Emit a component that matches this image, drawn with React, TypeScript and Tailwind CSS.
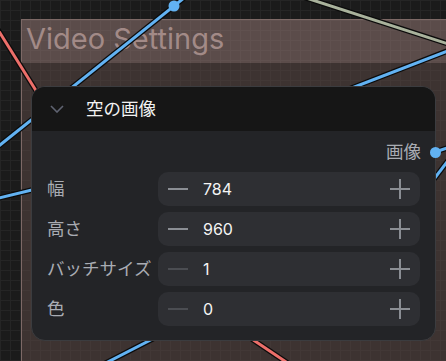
import React from 'react';

type Wire = { x1: number; y1: number; x2: number; y2: number; color: string };

const wires: Wire[] = [
  { x1: -10, y1: 17, x2: 50, y2: 113, color: '#ec6f6a' },
  { x1: 184, y1: -2, x2: -5, y2: 149, color: '#62b2f2' },
  { x1: -5, y1: 199, x2: 40, y2: 188, color: '#62b2f2' },
  { x1: 450, y1: 50, x2: 300, y2: 108, color: '#62b2f2' },
  { x1: 300, y1: -4, x2: 450, y2: 44.5, color: '#a9b29c' },
  { x1: 435, y1: 152, x2: 450, y2: 147, color: '#62b2f2' },
  { x1: 450, y1: 158, x2: 425, y2: 191, color: '#62b2f2' },
  { x1: 100, y1: 366, x2: 170, y2: 330, color: '#62b2f2' },
  { x1: 240, y1: 331, x2: 295, y2: 368, color: '#ec6f6a' },
];

const widgets = [
  { label: '幅', value: '784', canDecrement: true },
  { label: '高さ', value: '960', canDecrement: true },
  { label: 'バッチサイズ', value: '1', canDecrement: false },
  { label: '色', value: '0', canDecrement: false },
];

const font = "font-['Inter','Noto_Sans_CJK_JP',sans-serif]";

function Minus({ enabled }: { enabled: boolean }) {
  return (
    <svg width="20" height="20" viewBox="0 0 20 20">
      <line x1="0" y1="10" x2="20" y2="10" stroke={enabled ? '#8b8e94' : '#4b4d52'} strokeWidth="2" />
    </svg>
  );
}

function Plus() {
  return (
    <svg width="20" height="20" viewBox="0 0 20 20">
      <line x1="0" y1="10" x2="20" y2="10" stroke="#8b8e94" strokeWidth="2" />
      <line x1="10" y1="0" x2="10" y2="20" stroke="#8b8e94" strokeWidth="2" />
    </svg>
  );
}

function Wires() {
  return (
    <svg className="absolute inset-0" width="446" height="361" viewBox="0 0 446 361">
      {wires.map((w, i) => (
        <g key={i}>
          <line x1={w.x1} y1={w.y1} x2={w.x2} y2={w.y2} stroke="#0b0b0b" strokeWidth="5.5" />
          <line x1={w.x1} y1={w.y1} x2={w.x2} y2={w.y2} stroke={w.color} strokeWidth="3" />
        </g>
      ))}
      <circle cx="174" cy="6" r="5.5" fill="#62b2f2" />
    </svg>
  );
}

export default function App() {
  return (
    <div
      className={`relative w-[446px] h-[361px] overflow-hidden bg-[#1b1b1b] bg-[linear-gradient(to_right,#252525_1px,transparent_1px),linear-gradient(to_bottom,#252525_1px,transparent_1px)] bg-[length:10px_10px] ${font}`}
    >
      {/* group */}
      <div className="absolute left-[21px] top-[19px] right-[-20px] bottom-[-20px] flex flex-col border-l border-t border-[#7d6966]">
        <div className="h-[43px] bg-[#9c7e7a]/50 flex items-center pl-[4px] pb-[6px]">
          <span className="text-[29px] leading-none text-[#a28a87]">Video Settings</span>
        </div>
        <div className="flex-1 bg-[#5f4b47]/50" />
      </div>

      <Wires />

      {/* node */}
      <div className="absolute left-[31px] top-[86px] w-[405px] h-[255px] rounded-[14px] border border-[#3b3c3f] bg-[#232427] flex flex-col">
        <div className="h-[44px] shrink-0 rounded-t-[13px] bg-[#161616] flex items-center pl-[18px]">
          <svg width="14" height="8" viewBox="0 0 14 8">
            <polyline points="1,1 7,7 13,1" fill="none" stroke="#5f6371" strokeWidth="1.6" />
          </svg>
          <span className="ml-[22px] text-[17.5px] text-[#f2f2f2]">空の画像</span>
        </div>
        <div className="flex flex-col pt-[6px]">
          <div className="relative h-[30px] flex items-center justify-end pr-[14px]">
            <span className="text-[17.5px] text-[#a9acb3]">画像</span>
            <div className="absolute right-[-6px] top-[9.5px] w-[11px] h-[11px] rounded-full bg-[#62b2f2]" />
          </div>
          <div className="mt-[5px] flex flex-col gap-[6px] pl-[15px] pr-[15px]">
            {widgets.map((w) => (
              <div key={w.label} className="flex items-center h-[34px]">
                <span className="w-[111px] shrink-0 text-[17.5px] text-[#a9acb3] whitespace-nowrap">
                  {w.label}
                </span>
                <div className="flex-1 h-full rounded-[10px] bg-[#2e2f33] flex items-center pl-[10px] pr-[10px]">
                  <Minus enabled={w.canDecrement} />
                  <span className="ml-[15px] flex-1 text-[16px] text-[#f4f4f4]">{w.value}</span>
                  <Plus />
                </div>
              </div>
            ))}
          </div>
        </div>
      </div>
    </div>
  );
}
